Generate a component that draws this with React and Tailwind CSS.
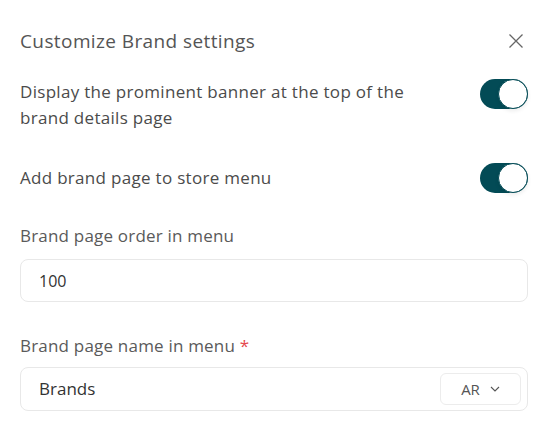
import React, { useState } from "react";

function Toggle({ on, onClick }) {
  return (
    <button
      onClick={onClick}
      className={`flex h-[30px] w-[48px] shrink-0 items-center rounded-full ${
        on ? "justify-end bg-[#034b56]" : "justify-start bg-gray-300"
      }`}
    >
      <span className="h-[30px] w-[30px] rounded-full border-[1.5px] border-[#034b56] bg-white shadow-[0_2px_4px_rgba(0,0,0,0.08)]" />
    </button>
  );
}

export default function App() {
  const [banner, setBanner] = useState(true);
  const [menu, setMenu] = useState(true);

  return (
    <div className="h-[428px] w-[550px] bg-white pl-5 pr-[22px] font-['Open_Sans',sans-serif] text-[#4b4b4b]">
      <div className="flex items-center justify-between pt-[27px]">
        <h2 className="text-[19px] leading-7 tracking-[0.4px] text-[#555]">Customize Brand settings</h2>
        <button className="mr-[4px] text-[#666]">
          <svg width="16" height="16" viewBox="0 0 16 16" fill="none" stroke="currentColor" strokeWidth="1.3">
            <path d="M1.5 1.5l13 13M14.5 1.5l-13 13" />
          </svg>
        </button>
      </div>

      <div className="mt-[24px] flex items-start justify-between">
        <p className="w-[400px] text-[17px] leading-[26px] tracking-[0.3px] text-[#4b4b4b]">
          Display the prominent banner at the top of the brand details page
        </p>
        <Toggle on={banner} onClick={() => setBanner(!banner)} />
      </div>

      <div className="mt-[32px] flex items-center justify-between">
        <p className="text-[17px] leading-[26px] tracking-[0.3px] text-[#4b4b4b]">Add brand page to store menu</p>
        <Toggle on={menu} onClick={() => setMenu(!menu)} />
      </div>

      <label className="mt-[31px] block text-[17px] leading-6 tracking-[0.2px] text-[#5a5a5a]">
        Brand page order in menu
      </label>
      <div className="mt-[11px] flex h-[43px] items-center rounded-lg border border-[#e8e8e8] px-[18px]">
        <span className="text-[16px] text-[#333]">100</span>
      </div>

      <label className="mt-[32px] block text-[17px] leading-6 tracking-[0.2px] text-[#5a5a5a]">
        Brand page name in menu <span className="text-[#e5484d]">*</span>
      </label>
      <div className="mt-[9px] flex h-[44px] items-center justify-between rounded-lg border border-[#e8e8e8] pl-[18px] pr-[6px]">
        <span className="text-[17px] text-[#333]">Brands</span>
        <button className="flex h-[32px] w-[81px] items-center justify-center gap-[10px] rounded-md border border-[#ececec] text-[15px] text-[#555]">
          AR
          <svg width="10" height="6" viewBox="0 0 10 6" fill="none" stroke="currentColor" strokeWidth="1.1">
            <path d="M1 1l4 4 4-4" />
          </svg>
        </button>
      </div>
    </div>
  );
}
